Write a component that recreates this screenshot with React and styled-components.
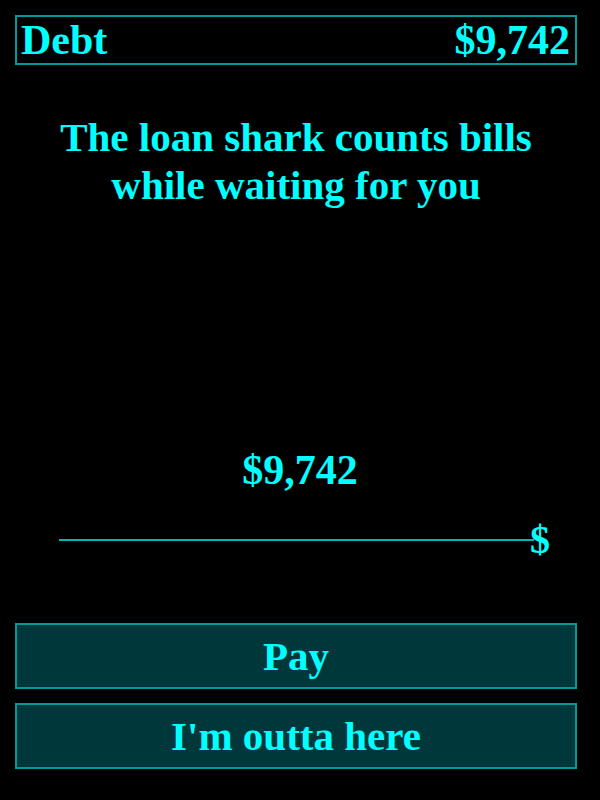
import React, { useState } from 'react'
import styled, { createGlobalStyle } from 'styled-components'

const Global = createGlobalStyle`
  html, body {
    margin: 0;
    padding: 0;
    background: #000;
  }
  body {
    font-family: "Liberation Serif", "DejaVu Serif", serif;
    font-weight: bold;
    color: #00ffff;
  }
`

const Screen = styled.div`
  width: 600px;
  height: 800px;
  box-sizing: border-box;
  padding: 15px 23px 0 15px;
  display: flex;
  flex-direction: column;
`

const StatusBar = styled.div`
  height: 50px;
  box-sizing: border-box;
  border: 2px solid #009a9c;
  display: flex;
  align-items: center;
  justify-content: space-between;
  padding: 0 5px 0 4px;
  font-size: 42px;
`

const Message = styled.h1`
  margin: 48px 0 0;
  font-size: 41px;
  line-height: 48px;
  text-align: center;
  font-weight: bold;
`

const Amount = styled.div`
  margin-top: 239px;
  padding-left: 8px;
  text-align: center;
  font-size: 42px;
  line-height: 44px;
`

const SliderRow = styled.div`
  margin-top: 28px;
  height: 40px;
  display: flex;
  align-items: center;
  padding: 0 27px 0 44px;
`

const Track = styled.div`
  flex: 1;
  height: 2px;
  background: #00b4b6;
`

const Thumb = styled.span`
  font-size: 40px;
  line-height: 40px;
  margin-left: -4px;
  cursor: pointer;
`

const Actions = styled.div`
  margin-top: 63px;
  display: flex;
  flex-direction: column;
  gap: 14px;
`

const Button = styled.button`
  height: 66px;
  box-sizing: border-box;
  border: 2px solid #009a9c;
  background: #00373a;
  color: #00ffff;
  font-family: "Liberation Serif", "DejaVu Serif", serif;
  font-weight: bold;
  font-size: 41px;
  padding: 0;
  cursor: pointer;
`

export default function App() {
  const [debt] = useState(9742)
  const fmt = (n) => '$' + n.toLocaleString('en-US')

  return (
    <>
      <Global />
      <Screen>
        <StatusBar>
          <span>Debt</span>
          <span>{fmt(debt)}</span>
        </StatusBar>
        <Message>
          The loan shark counts bills
          <br />
          while waiting for you
        </Message>
        <Amount>{fmt(debt)}</Amount>
        <SliderRow>
          <Track />
          <Thumb>$</Thumb>
        </SliderRow>
        <Actions>
          <Button>Pay</Button>
          <Button>I'm outta here</Button>
        </Actions>
      </Screen>
    </>
  )
}
